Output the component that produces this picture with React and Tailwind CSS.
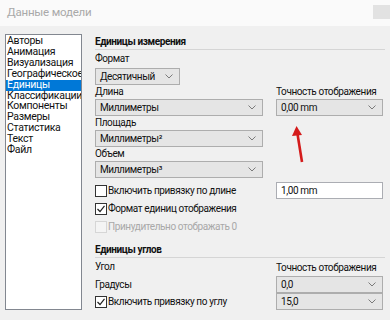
import React from "react";

const items = [
  "Авторы",
  "Анимация",
  "Визуализация",
  "Географическое положение",
  "Единицы",
  "Классификации",
  "Компоненты",
  "Размеры",
  "Статистика",
  "Текст",
  "Файл",
];

function Chevron() {
  return (
    <svg width="8" height="5" viewBox="0 0 8 5" className="shrink-0">
      <polyline points="0.5,0.5 4,4 7.5,0.5" fill="none" stroke="#7a7a7a" strokeWidth="1" />
    </svg>
  );
}

function Select({ value, className = "" }) {
  return (
    <div
      className={`h-[17px] flex items-center justify-between bg-[#e5e5e5] border border-[#adadad] pl-[4px] pr-[6px] ${className}`}
    >
      <span>{value}</span>
      <Chevron />
    </div>
  );
}

function Check({ checked, disabled, label }) {
  return (
    <div className="flex items-center">
      <div
        className={`w-[12px] h-[12px] shrink-0 border flex items-center justify-center ${
          disabled ? "border-[#d6d6d6] bg-[#f4f4f4]" : "border-[#333] bg-white"
        }`}
      >
        {checked && (
          <svg width="10" height="10" viewBox="0 0 10 10">
            <polyline points="1.5,5 4,7.5 8.5,1.8" fill="none" stroke="#222" strokeWidth="1.2" />
          </svg>
        )}
      </div>
      <span className={`ml-[1px] ${disabled ? "text-[#a8a8a8]" : ""}`}>{label}</span>
    </div>
  );
}

export default function App() {
  return (
    <div
      className="relative w-[390px] h-[320px] overflow-hidden bg-[#f0f0f0] text-[10px] leading-[12px] tracking-[-0.4px] text-[#111] whitespace-nowrap"
      style={{ fontFamily: 'Roboto, "Noto Sans", sans-serif' }}
    >
      <div className="h-[26px] bg-[#fafafa] flex items-center justify-between pl-[7px]">
        <span className="text-[11.5px] tracking-[-0.2px] text-[#a9a9a9] -mt-[2px]">Данные модели</span>
        <div className="w-[17px] h-[14px] bg-[#e2e2e2] -mt-[3px]" />
      </div>

      <div className="flex pl-[5px] pt-[8px] gap-[13px]">
        <div className="w-[77px] h-[276px] bg-white border border-[#828790] pt-[1px] overflow-hidden">
          {items.map((it) => (
            <div
              key={it}
              className={`leading-[10.9px] pl-[1px] text-[10.5px] tracking-[-0.3px] ${
                it === "Единицы" ? "bg-[#0078d7] text-white" : ""
              }`}
            >
              {it}
            </div>
          ))}
        </div>

        <div className="w-[290px] flex flex-col">
          <div className="h-[16px] flex items-center font-bold border-b border-[#d5d5d5]">
            Единицы измерения
          </div>
          <div className="h-[18px] flex items-center">Формат</div>
          <Select value="Десятичный" className="w-[85px]" />

          <div className="grid grid-cols-[168px_107px] gap-x-[13px]">
            <div className="h-[14px] flex items-center">Длина</div>
            <div className="h-[14px] flex items-center">Точность отображения</div>
            <Select value="Миллиметры" />
            <Select value="0,00 mm" />
            <div className="h-[14px] flex items-center">Площадь</div>
            <div />
            <Select value="Миллиметры²" />
            <div />
            <div className="h-[14px] flex items-center">Объем</div>
            <div />
            <Select value="Миллиметры³" />
            <div />
            <div className="h-[17px] flex items-center mt-[4px]">
              <Check label="Включить привязку по длине" />
            </div>
            <div className="h-[17px] mt-[4px] bg-white border border-[#abadb3] flex items-center pl-[4px]">
              1,00 mm
            </div>
          </div>
          <div className="h-[20px] flex items-center">
            <Check checked label="Формат единиц отображения" />
          </div>
          <div className="h-[16px] flex items-center">
            <Check disabled label="Принудительно отображать 0" />
          </div>

          <div className="h-[16px] mt-[7px] flex items-center font-bold border-b border-[#d5d5d5]">
            Единицы углов
          </div>
          <div className="grid grid-cols-[168px_107px] gap-x-[13px]">
            <div className="h-[18px] flex items-center">Угол</div>
            <div className="h-[18px] flex items-center pt-[2px]">Точность отображения</div>
            <div className="h-[17px] flex items-center">Градусы</div>
            <Select value="0,0" />
            <div className="h-[17px] flex items-center">
              <Check checked label="Включить привязку по углу" />
            </div>
            <Select value="15,0" />
          </div>
        </div>
      </div>

      <svg
        className="absolute left-[288px] top-[122px] pointer-events-none"
        width="20"
        height="44"
        viewBox="0 0 20 44"
      >
        <line x1="14" y1="40" x2="9.5" y2="12" stroke="#d41b1b" strokeWidth="2.6" />
        <polygon points="8.5,4 4,14 14,13" fill="#d41b1b" />
      </svg>
    </div>
  );
}
